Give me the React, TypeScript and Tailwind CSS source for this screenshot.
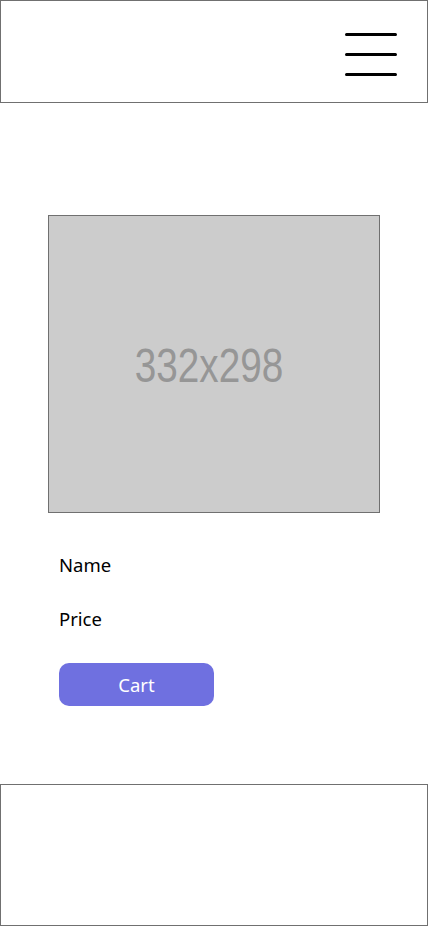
import React from "react";

const MenuIcon = () => (
  <svg width="52" height="44" viewBox="0 0 52 44" fill="none">
    <path
      d="M1.5 2.5H50.5M1.5 22.5H50.5M1.5 42.5H50.5"
      stroke="#000"
      strokeWidth="3"
      strokeLinecap="round"
    />
  </svg>
);

export default function App() {
  return (
    <div className="flex min-h-[926px] w-[428px] flex-col bg-white font-['Noto_Sans',sans-serif]">
      <header className="flex h-[103px] items-start justify-end border border-[#707070] pr-[30px] pt-[31px]">
        <MenuIcon />
      </header>

      <main className="flex flex-1 flex-col pt-[112px]">
        <div className="ml-[48px] flex h-[298px] w-[332px] items-center justify-center border border-[#707070] bg-[#cccccc] pr-[10px] pt-[3px]">
          <span className="scale-x-[0.79] font-['Liberation_Sans',Arial,sans-serif] text-[49px] leading-none text-[#969696]">
            332x298
          </span>
        </div>

        <div className="ml-[59px] flex flex-col pt-[39px]">
          <p className="text-[18.5px] leading-[26px] text-black">Name</p>
          <p className="mt-[28px] text-[18.5px] leading-[26px] text-black">Price</p>
          <button className="mt-[31px] flex h-[43px] w-[155px] items-center justify-center rounded-[10px] bg-[#6f70e0] text-[18.5px] text-white">
            Cart
          </button>
        </div>
      </main>

      <footer className="mt-auto h-[142px] border border-[#707070]" />
    </div>
  );
}
